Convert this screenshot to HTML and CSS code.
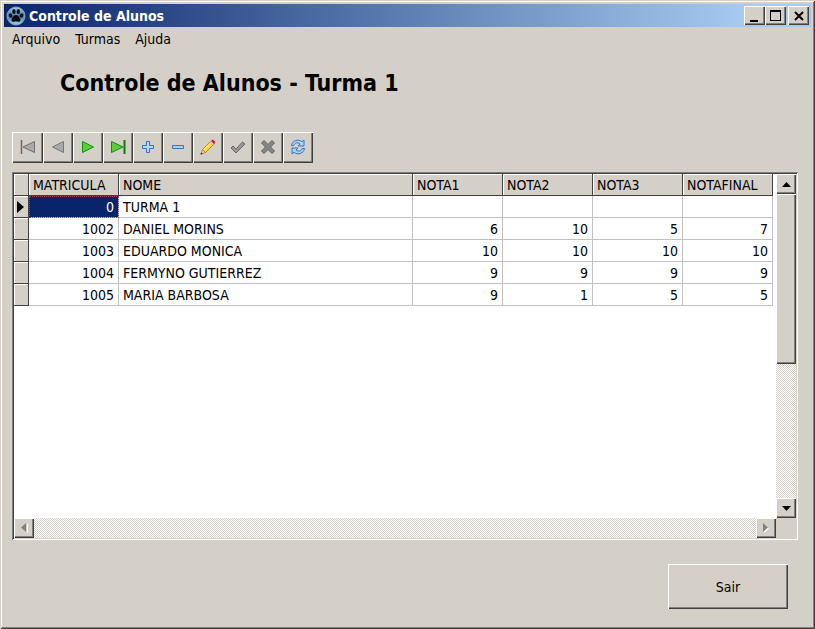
FILE: index.html
```html
<!DOCTYPE html>
<html lang="pt-BR">
<head>
<meta charset="utf-8">
<title>Controle de Alunos</title>
<link rel="stylesheet" href="styles.css">
</head>
<body>
<div class="window">
  <header class="titlebar">
    <svg class="app-icon" width="20" height="20" viewBox="0 0 20 20" aria-hidden="true">
      <defs><linearGradient id="orb" x1="0" y1="0" x2="0" y2="1"><stop offset="0" stop-color="#a9cbe6"/><stop offset=".5" stop-color="#4c7ca6"/><stop offset="1" stop-color="#9ed0ec"/></linearGradient></defs>
      <circle cx="10" cy="10" r="9" fill="url(#orb)" stroke="#7fa6c8"/>
      <g fill="#050b14">
        <ellipse cx="4.600" cy="9.500" rx="1.700" ry="2.300" transform="rotate(-25 4.600 9.500)"/>
        <ellipse cx="7.900" cy="5.600" rx="1.700" ry="2.500"/>
        <ellipse cx="12.300" cy="5.600" rx="1.700" ry="2.500"/>
        <ellipse cx="15.500" cy="9.500" rx="1.700" ry="2.300" transform="rotate(25 15.500 9.500)"/>
        <path d="M10 9c2 0 2.600 1.700 3.800 3 1.400 1.600.6 4-1.400 3.800-1-.1-1.500-.5-2.400-.5s-1.400.4-2.400.5c-2 .2-2.800-2.200-1.400-3.800C7.400 10.700 8 9 10 9z"/>
      </g>
    </svg>
    <span class="titlebar-text">Controle de Alunos</span>
    <button class="raised caption-button" type="button" aria-label="Minimizar"><svg width="16" height="14" viewBox="0 0 16 14"><path d="M3 11h8v2H3z"/></svg></button>
    <button class="raised caption-button" type="button" aria-label="Maximizar"><svg width="16" height="14" viewBox="0 0 16 14"><path fill-rule="evenodd" d="M2 1h11v11H2zM3 3v8h9V3z"/></svg></button>
    <button class="raised caption-button caption-close" type="button" aria-label="Fechar"><svg width="16" height="14" viewBox="0 0 16 14"><path d="M4 3l8 8M12 3l-8 8" stroke="#000" stroke-width="2"/></svg></button>
  </header>
  <nav class="menu" aria-label="Menu principal">
    <button type="button">Arquivo</button>
    <button type="button">Turmas</button>
    <button type="button">Ajuda</button>
  </nav>
  <main class="content">
    <h1>Controle de Alunos - Turma 1</h1>
    <div class="toolbar" role="toolbar" aria-label="Registros">
      <button class="raised" type="button" aria-label="Primeiro"><svg width="18" height="16" viewBox="0 0 18 16"><path d="M15.500 2.500v11L4 8z" fill="#aaa" stroke="#707070"/><path d="M2.500 1v14" stroke="#666" stroke-width="1.500"/></svg></button>
      <button class="raised" type="button" aria-label="Anterior"><svg width="18" height="16" viewBox="0 0 18 16"><path d="M14.500 2.500v11L3.500 8z" fill="#aaa" stroke="#777"/></svg></button>
      <button class="raised" type="button" aria-label="Próximo"><svg width="18" height="16" viewBox="0 0 18 16"><path d="M3.500 2.500v11L14.500 8z" fill="#5ccc39" stroke="#168c18"/></svg></button>
      <button class="raised" type="button" aria-label="Último"><svg width="18" height="16" viewBox="0 0 18 16"><path d="M2.500 2.500v11L14 8z" fill="#5ccc39" stroke="#168c18"/><path d="M15.500 1v14" stroke="#087c10" stroke-width="2"/></svg></button>
      <button class="raised" type="button" aria-label="Inserir"><svg width="18" height="16" viewBox="0 0 18 16"><path d="M7.500 2.500h3v4h4v3h-4v4h-3v-4h-4v-3h4z" fill="#b4d6fa" stroke="#3973c4"/></svg></button>
      <button class="raised" type="button" aria-label="Excluir"><svg width="18" height="16" viewBox="0 0 18 16"><path d="M3.500 6.500h11v3h-11z" fill="#a9d0f8" stroke="#3973c4"/></svg></button>
      <button class="raised" type="button" aria-label="Editar"><svg width="18" height="16" viewBox="0 0 18 16"><path d="M2 15l1.500-4.500 3 3z" fill="#f2d3a0" stroke="#9a6b20" stroke-width=".7"/><path d="M3.500 10.500l8-8 3 3-8 8z" fill="#ffd83c" stroke="#a87808" stroke-width=".8"/><path d="M4.500 11l7.500-7.500" stroke="#fff5a0"/><path d="M11 3l1-1 3 3-1 1z" fill="#ddd" stroke="#999" stroke-width=".5"/><path d="M12 2l1-1c1-.8 3.800 1.800 3 3l-1 1z" fill="#e01822"/><path d="M1.500 15.500l.6-2 1.400 1.400z" fill="#222"/></svg></button>
      <button class="raised" type="button" aria-label="Gravar"><svg width="18" height="16" viewBox="0 0 18 16"><path d="M2 9l2-2 3 3 6.500-7L16 5l-9 9z" fill="#999" stroke="#666"/></svg></button>
      <button class="raised" type="button" aria-label="Cancelar"><svg width="18" height="16" viewBox="0 0 18 16"><path d="M5 1.500l4 4 4-4L15.500 4l-4 4 4 4-2.500 2.500-4-4-4 4L2.500 12l4-4-4-4z" fill="#858585" stroke="#606060"/></svg></button>
      <button class="raised" type="button" aria-label="Atualizar"><svg width="18" height="16" viewBox="0 0 18 16"><g fill="#a9d2fa" stroke="#3974c4"><path id="sync" d="M2.500 6.500C3 2 9 -.8 13 2.700l2-1.700v6H9l2-2C8.500 2.800 5.500 4 4.800 6.500z"/><use href="#sync" transform="rotate(180 9 8)"/></g></svg></button>
    </div>
    <section class="data-grid">
      <div class="grid-view">
        <table>
          <colgroup><col class="col-mark"><col class="col-number"><col><col class="col-number"><col class="col-number"><col class="col-number"><col class="col-number"></colgroup>
          <thead><tr><th></th><th>MATRICULA</th><th>NOME</th><th>NOTA1</th><th>NOTA2</th><th>NOTA3</th><th>NOTAFINAL</th></tr></thead>
          <tbody>
            <tr><th><svg width="8" height="12" viewBox="0 0 8 12" aria-label="Registro atual"><path d="M0 0l7 6-7 6z"/></svg></th><td class="selected">0</td><td class="name">TURMA 1</td><td></td><td></td><td></td><td></td></tr>
            <tr><th></th><td>1002</td><td class="name">DANIEL MORINS</td><td>6</td><td>10</td><td>5</td><td>7</td></tr>
            <tr><th></th><td>1003</td><td class="name">EDUARDO MONICA</td><td>10</td><td>10</td><td>10</td><td>10</td></tr>
            <tr><th></th><td>1004</td><td class="name">FERMYNO GUTIERREZ</td><td>9</td><td>9</td><td>9</td><td>9</td></tr>
            <tr><th></th><td>1005</td><td class="name">MARIA BARBOSA</td><td>9</td><td>1</td><td>5</td><td>5</td></tr>
          </tbody>
        </table>
      </div>
      <div class="scrollbar scrollbar-vertical">
        <button class="raised" type="button" aria-label="Rolar para cima"><svg width="9" height="5" viewBox="0 0 9 5"><path d="M0 5l4.500-5L9 5z"/></svg></button>
        <div class="track"><div class="raised thumb"></div></div>
        <button class="raised" type="button" aria-label="Rolar para baixo"><svg width="9" height="5" viewBox="0 0 9 5"><path d="M0 0l4.500 5L9 0z"/></svg></button>
      </div>
      <div class="scrollbar scrollbar-horizontal">
        <button class="raised" type="button" disabled aria-label="Rolar para a esquerda"><svg width="7" height="10" viewBox="0 0 7 10"><path d="M6 1v9l1-1V1z" fill="#fff"/><path d="M5 0v9L0 4.500z" fill="#808080"/></svg></button>
        <div class="track"></div>
        <button class="raised" type="button" disabled aria-label="Rolar para a direita"><svg width="7" height="10" viewBox="0 0 7 10"><path d="M1 1v9l5-4.500z" fill="#fff"/><path d="M0 0v9l5-4.500z" fill="#808080"/></svg></button>
      </div>
    </section>
    <footer><button class="raised exit-button" type="button">Sair</button></footer>
  </main>
</div>
</body>
</html>
```

FILE: styles.css
```css
:root {
  --face: #d4d0c8;
  --shadow: #808080;
  --dark: #404040;
  --line: #c0c0c0;
}

* { box-sizing: border-box; }

body {
  margin: 0;
  background: var(--face);
  color: #000;
  font: 14px/20px "DejaVu Sans Condensed", "DejaVu Sans", sans-serif;
}

button {
  padding: 0;
  border: 0;
  background: var(--face);
  color: inherit;
  font: inherit;
}

svg { display: block; flex: none; }

.raised {
  display: flex;
  align-items: center;
  justify-content: center;
  background: var(--face);
  box-shadow: inset 1px 1px #fff, inset -1px -1px var(--dark), inset -2px -2px var(--shadow);
}

.window {
  display: flex;
  flex-direction: column;
  min-height: 100vh;
  padding: 4px;
  box-shadow: inset 1px 1px var(--face), inset -1px -1px var(--dark), inset 2px 2px #fff, inset -2px -2px var(--shadow);
}

.titlebar {
  display: flex;
  align-items: center;
  height: 23px;
  padding: 0 2px;
  background: linear-gradient(90deg, #0a246a, #a6caf0 92%);
}

.titlebar-text {
  flex: 1;
  margin-left: 3px;
  color: #fff;
  font-size: 14px;
  font-weight: bold;
}

.caption-button { width: 21px; height: 19px; }
.caption-close { margin-left: 2px; }

.menu { display: flex; gap: 15px; height: 24px; padding: 0 8px; }

.content {
  display: flex;
  flex: 1;
  flex-direction: column;
  padding: 16px 13px 16px 8px;
}

h1 {
  margin: 0 0 33px 48px;
  font-size: 23px;
  line-height: 32px;
}

.toolbar { display: flex; height: 31px; margin-bottom: 9px; }
.toolbar button { width: 30px; padding-bottom: 2px; }
.toolbar button:first-child { width: 31px; }

.data-grid {
  display: grid;
  flex: 1;
  grid-template-columns: 1fr 20px;
  grid-template-rows: 1fr 20px;
  padding: 2px;
  box-shadow: inset 1px 1px var(--shadow), inset -1px -1px #fff, inset 2px 2px var(--dark);
}

.grid-view { padding-right: 3px; background: #fff; }

table { width: 100%; border-spacing: 0; table-layout: fixed; }
.col-mark { width: 15px; }
.col-number { width: 90px; }

th, td {
  height: 22px;
  padding: 0 4px;
  border: solid var(--line);
  border-width: 0 1px 1px 0;
  text-align: right;
  white-space: nowrap;
}

th {
  border-color: var(--dark);
  background: var(--face);
  box-shadow: inset 1px 1px #fff;
  font-weight: normal;
  text-align: left;
}

tbody th { padding: 0 3px; }
.name { text-align: left; }
.selected { background: #0a246a; color: #fff; outline: 1px dotted #a04060; outline-offset: -1px; }

.scrollbar { display: flex; }
.scrollbar-vertical { flex-direction: column; }
.scrollbar button { width: 20px; height: 20px; }
.track {
  flex: 1;
  background: repeating-conic-gradient(#fff 0 25%, var(--face) 0 50%) 0 0 / 2px 2px;
}
.thumb { height: 56%; }

footer { display: flex; justify-content: flex-end; padding: 24px 10px 0 0; }
.exit-button { width: 120px; height: 45px; }
```
